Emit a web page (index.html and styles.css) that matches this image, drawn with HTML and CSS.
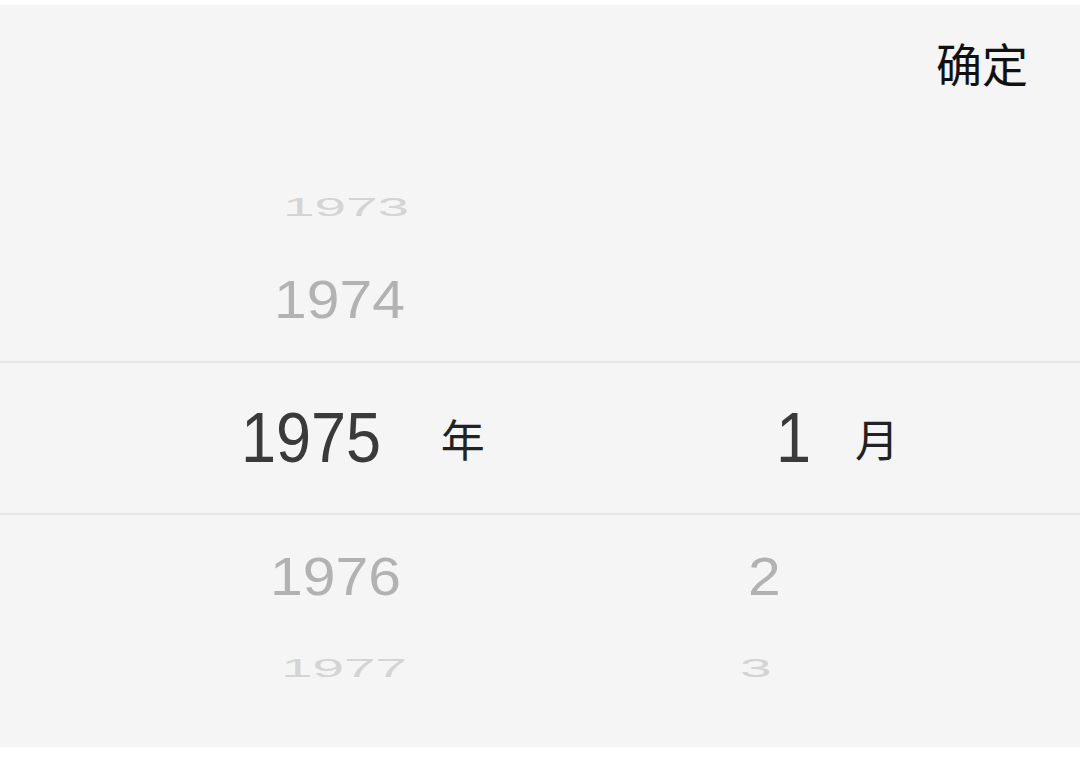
FILE: index.html
```html
<!DOCTYPE html>
<html lang="zh">
<head>
<meta charset="utf-8">
<title>日期选择</title>
<link rel="stylesheet" href="styles.css">
</head>
<body>
<div class="panel">
  <div class="header"><span class="confirm">确定</span></div>
  <div class="wheel">
    <div class="row far top-far">
      <div class="ycell"><span class="num far-num y1973">1973</span></div>
      <div class="mcell"></div>
    </div>
    <div class="row near top-near">
      <div class="ycell"><span class="num near-num y1974">1974</span></div>
      <div class="mcell"></div>
    </div>
    <div class="row selected">
      <div class="ycell"><span class="num sel-num y1975">1975</span><span class="unit u-year">年</span></div>
      <div class="mcell"><span class="num sel-num m1">1</span><span class="unit u-month">月</span></div>
    </div>
    <div class="row near bottom-near">
      <div class="ycell"><span class="num near-num y1976">1976</span></div>
      <div class="mcell"><span class="num near-num m2">2</span></div>
    </div>
    <div class="row far bottom-far">
      <div class="ycell"><span class="num far-num y1977">1977</span></div>
      <div class="mcell"><span class="num far-num m3">3</span></div>
    </div>
  </div>
</div>
</body>
</html>
```

FILE: styles.css
```css
html, body {
  margin: 0;
  padding: 0;
  background: #ffffff;
}
body {
  width: 1080px;
  height: 757px;
  overflow: hidden;
  font-family: "Liberation Sans", "Noto Sans CJK SC", sans-serif;
}
.panel {
  margin-top: 5px;
  height: 742px;
  background: #f5f5f5;
  display: flex;
  flex-direction: column;
}
.header {
  height: 118px;
  display: flex;
  justify-content: flex-end;
  align-items: center;
  padding-right: 52px;
}
.confirm {
  font-family: "Noto Sans CJK SC", sans-serif;
  font-size: 46px;
  color: #111111;
  line-height: 1;
  margin-top: -4px;
}
.wheel {
  display: flex;
  flex-direction: column;
  padding-top: 38px;
}
.row {
  display: grid;
  grid-template-columns: 560px 520px;
  align-items: center;
  height: 92px;
}
.top-near {
  height: 92px;
  margin-bottom: 16px;
}
.selected {
  height: 150px;
  border-top: 2px solid #e6e6e6;
  border-bottom: 2px solid #e6e6e6;
}
.bottom-near {
  margin-top: 15px;
}
.ycell, .mcell {
  display: flex;
  align-items: center;
  height: 100%;
}
.num {
  display: inline-block;
  line-height: 1;
  font-family: "Liberation Sans", sans-serif;
  transform-origin: left center;
}
.near-num {
  font-size: 54px;
  color: #b2b2b2;
  transform: scaleX(1.09);
}
.far-num {
  font-size: 54px;
  color: #d4d4d4;
  transform: scale(1.05, 0.48);
}
.sel-num {
  font-size: 70px;
  color: #3a3a3a;
  transform: scaleX(0.9);
}
.unit {
  font-family: "Noto Sans CJK SC", sans-serif;
  font-size: 44px;
  color: #222222;
  line-height: 1;
}
.y1973 { margin-left: 283px; }
.y1974 { margin-left: 274px; }
.y1975 { margin-left: 241px; }
.u-year { margin-left: 44px; }
.y1976 { margin-left: 270px; }
.y1977 { margin-left: 281px; }
.m1 { margin-left: 216px; }
.u-month { margin-left: 40px; }
.m2 { margin-left: 188px; }
.m3 { margin-left: 180px; }
```
